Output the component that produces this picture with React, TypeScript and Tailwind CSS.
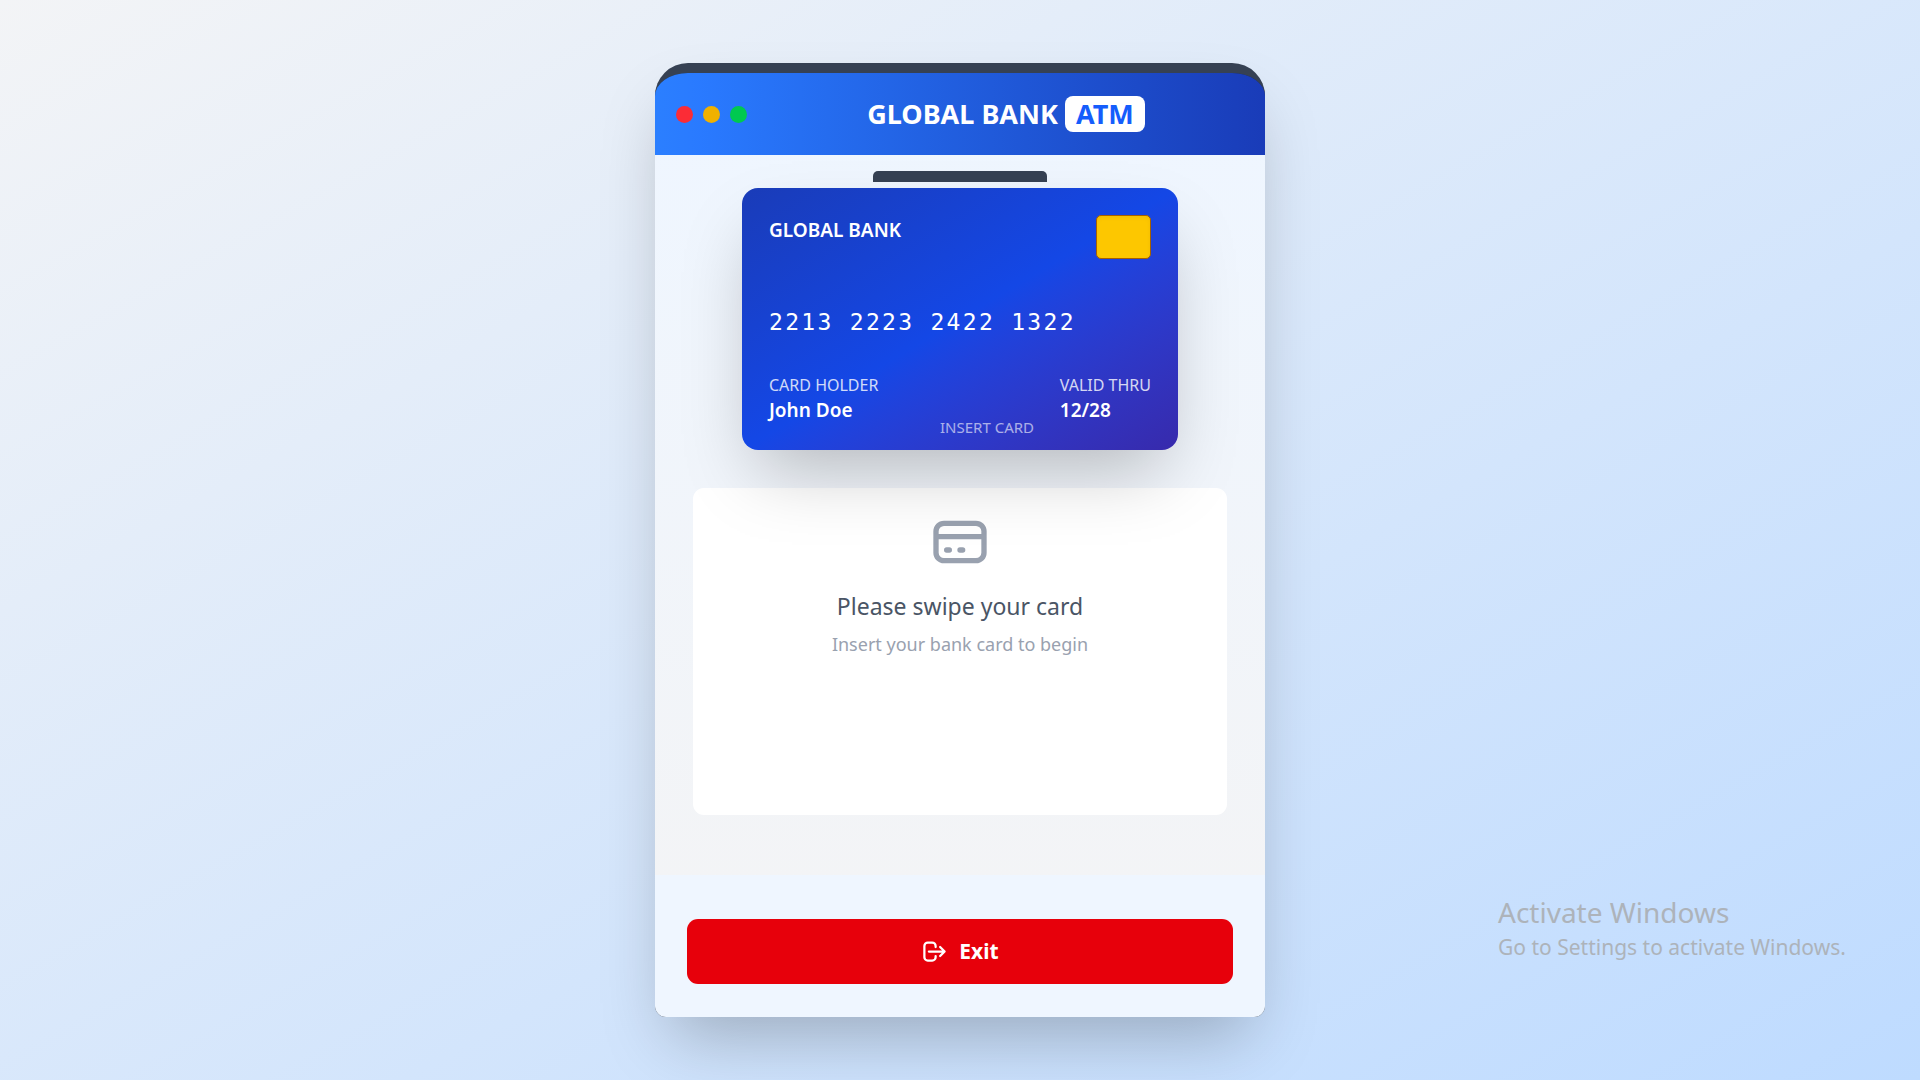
function TitleBar() {
  return (
    <header className="flex h-[82px] items-center rounded-t-[33px_23px] bg-linear-to-r from-blue-500 to-blue-800 pl-[21px]">
      <div className="flex gap-[10px]">
        <span className="size-[17px] rounded-full bg-[#fb2c36]" />
        <span className="size-[17px] rounded-full bg-[#f0b100]" />
        <span className="size-[17px] rounded-full bg-[#00c950]" />
      </div>
      <h1 className="flex flex-1 items-center justify-center gap-[7px] text-[27px] leading-9 font-bold text-white">
        GLOBAL BANK
        <span className="rounded-lg bg-white px-[11px] text-[#155dfc]">ATM</span>
      </h1>
    </header>
  );
}

function BankCard() {
  return (
    <section
      aria-label="Bank card"
      className="relative z-10 mt-1.5 flex h-[262px] w-[436px] flex-col justify-between rounded-2xl bg-linear-to-br from-blue-800 via-blue-700 to-indigo-800 p-[27px] text-white shadow-[0_34px_68px_-16px_rgba(0,0,0,0.25)]"
    >
      <div className="flex items-start justify-between">
        <h2 className="text-[19px] leading-[30px] font-semibold">GLOBAL BANK</h2>
        <span className="h-[44px] w-[55px] rounded-[5px] border border-[#a65f00] bg-[#fdc700] inset-shadow-sm" />
      </div>
      <p className="pt-3 font-['DejaVu_Sans_Mono',monospace] text-[23px] leading-8 tracking-widest whitespace-pre">
        2213 2223 2422 1322
      </p>
      <div className="flex justify-between leading-[25px]">
        <div>
          <p className="text-[16px] leading-[25px] opacity-80">CARD HOLDER</p>
          <p className="text-[19px] leading-[25px] font-semibold">John Doe</p>
        </div>
        <div>
          <p className="text-[16px] leading-[25px] opacity-80">VALID THRU</p>
          <p className="text-[19px] leading-[25px] font-semibold">12/28</p>
        </div>
      </div>
      <span className="absolute right-36 bottom-3 text-[15px] leading-[22px] opacity-60">INSERT CARD</span>
    </section>
  );
}

function Screen() {
  return (
    <section className="mt-[38px] flex min-h-[327px] w-full flex-col items-center rounded-[11px] bg-white pt-[22px] text-center">
      <svg className="size-16 text-[#99a1af]" viewBox="0 0 24 24" fill="none" stroke="currentColor" strokeWidth="2" strokeLinecap="round" strokeLinejoin="round" aria-hidden="true">
        <path d="M3 10h18M7 15h1m4 0h1m-7 4h12a3 3 0 003-3V8a3 3 0 00-3-3H6a3 3 0 00-3 3v8a3 3 0 003 3z" />
      </svg>
      <p className="mt-[13px] text-[23px] leading-[38px] text-gray-600">Please swipe your card</p>
      <p className="mt-1 text-[18px] leading-[30px] text-[#99a1af]">Insert your bank card to begin</p>
    </section>
  );
}

export default function App() {
  return (
    <div className="relative flex min-h-screen items-center justify-center bg-linear-to-br from-gray-100 to-blue-200 font-['Segoe_UI','Noto_Sans',sans-serif]">
      <div className="w-full max-w-[610px] rounded-t-[33px] rounded-b-[11px] border-t-10 border-gray-700 bg-gray-800 shadow-[0_34px_68px_-16px_rgba(0,0,0,0.25)]">
        <TitleBar />
        <main className="flex flex-col items-center bg-linear-to-b from-blue-50 to-gray-100 px-[38px] pt-4 pb-[60px]">
          <div className="h-[11px] w-[174px] rounded-t-[5px] bg-gray-700" />
          <BankCard />
          <Screen />
        </main>
        <footer className="rounded-b-[11px] bg-blue-50 px-8 pt-11 pb-[33px]">
          <button type="button" className="flex h-[65px] w-full items-center justify-center gap-[11px] rounded-[11px] bg-[#e7000b] text-[21px] font-bold text-white">
            <svg className="size-[27px]" viewBox="0 0 24 24" fill="none" stroke="currentColor" strokeWidth="2" strokeLinecap="round" strokeLinejoin="round" aria-hidden="true">
              <path d="M17 16l4-4m0 0l-4-4m4 4H7m6 4v1a3 3 0 01-3 3H6a3 3 0 01-3-3V7a3 3 0 013-3h4a3 3 0 013 3v1" />
            </svg>
            Exit
          </button>
        </footer>
      </div>
      <aside className="absolute right-[72px] bottom-[118px] w-[350px] whitespace-nowrap text-[#adb3ba]">
        <p className="text-[28px] leading-10">Activate Windows</p>
        <p className="text-[21px] leading-[30px]">Go to Settings to activate Windows.</p>
      </aside>
    </div>
  );
}
